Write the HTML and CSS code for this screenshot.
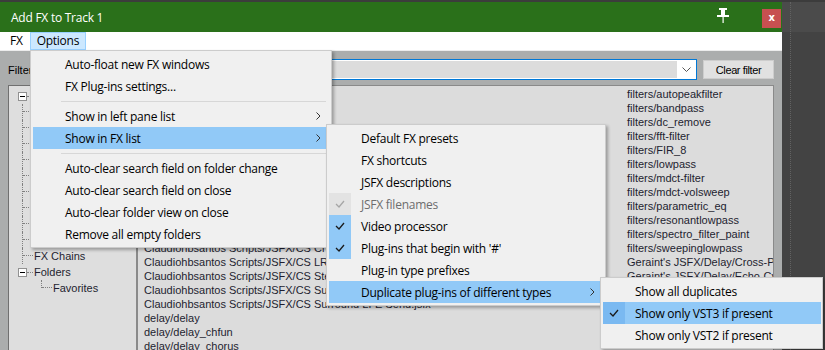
FILE: index.html
```html
<!DOCTYPE html>
<html>
<head>
    <title>Add FX to Track 1</title>
    <link rel="stylesheet" href="styles.css">
</head>
<body>
    <div class="desk">
        <div class="window">
            <div class="titlebar">
                <span class="title">Add FX to Track 1</span>
                <svg class="pin" width="12" height="15" viewBox="0 0 12 15">
                    <rect x="2" y="0" width="8" height="2" fill="#fff"/>
                    <rect x="4" y="2" width="4" height="6" fill="#fff"/>
                    <rect x="0" y="7" width="12" height="2" fill="#fff"/>
                    <rect x="5.5" y="9" width="1.2" height="6" fill="#fff"/>
                </svg>
                <div class="close">x</div>
            </div>
            <div class="menubar">
                <span class="mb-item">FX</span>
                <span class="mb-item open">Options</span>
            </div>
            <div class="panel">
                <div class="filter-row">
                    <span class="filter-label">Filter</span>
                    <div class="combo">
                        <div class="combo-field"></div>
                        <div class="combo-btn">
                            <svg width="9" height="5" viewBox="0 0 9 5"><polyline points="0.5,0.5 4.5,4.5 8.5,0.5" fill="none" stroke="#555" stroke-width="1"/></svg>
                        </div>
                    </div>
                    <button class="clear-btn">Clear filter</button>
                </div>
                <div class="panes">
                    <div class="tree">
                        <div class="node"><span class="exp"></span><span class="hline"></span><span class="lbl">All Plugins</span></div>
                        <div class="node"><span class="twig"></span><span class="lbl">New</span></div>
                        <div class="node"><span class="twig"></span><span class="lbl">Recent</span></div>
                        <div class="node"><span class="twig"></span><span class="lbl">VST</span></div>
                        <div class="node"><span class="twig"></span><span class="lbl">VSTi</span></div>
                        <div class="node"><span class="twig"></span><span class="lbl">VST3</span></div>
                        <div class="node"><span class="twig"></span><span class="lbl">VST3i</span></div>
                        <div class="node"><span class="twig"></span><span class="lbl">JS</span></div>
                        <div class="node"><span class="twig"></span><span class="lbl">Cockos</span></div>
                        <div class="node"><span class="twig"></span><span class="lbl">Track Templates</span></div>
                        <div class="node"><span class="twig"></span><span class="lbl">FX Chains</span></div>
                        <div class="node"><span class="exp"></span><span class="hline"></span><span class="lbl">Folders</span></div>
                        <div class="node"><span class="twig last"></span><span class="lbl">Favorites</span></div>
                    </div>
                    <div class="fxlist">
                        <div class="col">
                            <div>analysis/gfxanalyzer</div>
                            <div>analysis/gfxscope</div>
                            <div>analysis/loudness_meter</div>
                            <div>analysis/spectrograph</div>
                            <div>analysis/tuner</div>
                            <div>Claudiohbsantos Scripts/JSFX/CS 5.1 Panner</div>
                            <div>Claudiohbsantos Scripts/JSFX/CS Auto Gain</div>
                            <div>Claudiohbsantos Scripts/JSFX/CS Band Split</div>
                            <div>Claudiohbsantos Scripts/JSFX/CS Bus Meter</div>
                            <div>Claudiohbsantos Scripts/JSFX/CS Center Cut</div>
                            <div>Claudiohbsantos Scripts/JSFX/CS Channel Mapper</div>
                            <div>Claudiohbsantos Scripts/JSFX/CS Channel Router</div>
                            <div>Claudiohbsantos Scripts/JSFX/CS LR Mono Sum</div>
                            <div>Claudiohbsantos Scripts/JSFX/CS Stereo Width</div>
                            <div>Claudiohbsantos Scripts/JSFX/CS Surround Meter</div>
                            <div>Claudiohbsantos Scripts/JSFX/CS Surround LFE Send.jsfx</div>
                            <div>delay/delay</div>
                            <div>delay/delay_chfun</div>
                            <div>delay/delay_chorus</div>
                        </div>
                        <div class="col">
                            <div>filters/autopeakfilter</div>
                            <div>filters/bandpass</div>
                            <div>filters/dc_remove</div>
                            <div>filters/fft-filter</div>
                            <div>filters/FIR_8</div>
                            <div>filters/lowpass</div>
                            <div>filters/mdct-filter</div>
                            <div>filters/mdct-volsweep</div>
                            <div>filters/parametric_eq</div>
                            <div>filters/resonantlowpass</div>
                            <div>filters/spectro_filter_paint</div>
                            <div>filters/sweepinglowpass</div>
                            <div>Geraint's JSFX/Delay/Cross-Pollinator</div>
                            <div>Geraint's JSFX/Delay/Echo-Cycles</div>
                        </div>
                    </div>
                </div>
            </div>
        </div>
        <div class="side"><div class="side-line"></div></div>
    </div>

    <div class="menu opt-menu">
        <div class="mi"><span class="ck"></span>Auto-float new FX windows</div>
        <div class="mi"><span class="ck"></span>FX Plug-ins settings...</div>
        <div class="sep"></div>
        <div class="mi"><span class="ck"></span>Show in left pane list<svg class="arrow" width="5" height="8" viewBox="0 0 5 8"><polyline points="0.5,0.5 4,4 0.5,7.5" fill="none" stroke="#333" stroke-width="1"/></svg></div>
        <div class="mi hl"><span class="ck"></span>Show in FX list<svg class="arrow" width="5" height="8" viewBox="0 0 5 8"><polyline points="0.5,0.5 4,4 0.5,7.5" fill="none" stroke="#333" stroke-width="1"/></svg></div>
        <div class="sep"></div>
        <div class="mi"><span class="ck"></span>Auto-clear search field on folder change</div>
        <div class="mi"><span class="ck"></span>Auto-clear search field on close</div>
        <div class="mi"><span class="ck"></span>Auto-clear folder view on close</div>
        <div class="mi"><span class="ck"></span>Remove all empty folders</div>
    </div>

    <div class="menu sub-menu">
        <div class="mi"><span class="ck"></span>Default FX presets</div>
        <div class="mi"><span class="ck"></span>FX shortcuts</div>
        <div class="mi"><span class="ck"></span>JSFX descriptions</div>
        <div class="mi disabled"><span class="ck dim"><svg width="10" height="8" viewBox="0 0 10 8"><polyline points="1,4 4,7 9,1" fill="none" stroke="#a6a6a6" stroke-width="1.3"/></svg></span>JSFX filenames</div>
        <div class="mi"><span class="ck on"><svg width="10" height="8" viewBox="0 0 10 8"><polyline points="1,4 4,7 9,1" fill="none" stroke="#1a1a1a" stroke-width="1.3"/></svg></span>Video processor</div>
        <div class="mi"><span class="ck on"><svg width="10" height="8" viewBox="0 0 10 8"><polyline points="1,4 4,7 9,1" fill="none" stroke="#1a1a1a" stroke-width="1.3"/></svg></span>Plug-ins that begin with '#'</div>
        <div class="mi"><span class="ck"></span>Plug-in type prefixes</div>
        <div class="mi hl"><span class="ck"></span>Duplicate plug-ins of different types<svg class="arrow" width="5" height="8" viewBox="0 0 5 8"><polyline points="0.5,0.5 4,4 0.5,7.5" fill="none" stroke="#333" stroke-width="1"/></svg></div>
    </div>

    <div class="menu dup-menu">
        <div class="mi"><span class="ck"></span>Show all duplicates</div>
        <div class="mi hl"><span class="ck on-hl"><svg width="10" height="8" viewBox="0 0 10 8"><polyline points="1,4 4,7 9,1" fill="none" stroke="#1a1a1a" stroke-width="1.3"/></svg></span>Show only VST3 if present</div>
        <div class="mi"><span class="ck"></span>Show only VST2 if present</div>
    </div>
</body>
</html>
```

FILE: styles.css
```css
* {
    box-sizing: border-box;
}
body {
    margin: 0;
    width: 825px;
    height: 350px;
    overflow: hidden;
    position: relative;
    background-color: #3c3c3c;
    font-family: "Open Sans", sans-serif;
    font-size: 12px;
    letter-spacing: -0.25px;
}
.desk {
    display: flex;
    height: 350px;
    padding-top: 2px;
}
.window {
    width: 782px;
    flex: none;
    display: flex;
    flex-direction: column;
}
.side {
    flex: 1;
    background: linear-gradient(#4b4b4b 30px, #434343 30px);
}
.side-line {
    margin-left: 8px;
    height: 100%;
    border-left: 1px dotted #626262;
}

/* title bar */
.titlebar {
    height: 30px;
    flex: none;
    background-color: #2a701a;
    display: flex;
    align-items: center;
    padding-left: 11px;
    color: white;
}
.title {
    flex: 1;
}
.pin {
    margin-right: 33px;
    margin-top: -3px;
}
.close {
    width: 19px;
    height: 19px;
    margin-top: 3px;
    margin-right: 1px;
    background-color: #c75050;
    display: flex;
    align-items: center;
    justify-content: center;
    font-family: "DejaVu Sans", sans-serif;
    font-weight: bold;
    font-size: 10px;
    line-height: 1;
    padding-bottom: 2px;
}

/* menu bar */
.menubar {
    height: 19px;
    flex: none;
    background-color: white;
    border-bottom: 1px solid #ececec;
    display: flex;
    padding-left: 3px;
}
.mb-item {
    height: 18px;
    line-height: 16px;
    padding: 0 6px;
    border: 1px solid transparent;
    color: black;
}
.mb-item.open {
    background-color: #cce8ff;
    border-color: #99d1ff;
}

/* window body */
.panel {
    flex: 1;
    min-height: 0;
    background-color: #abadad;
    padding: 8px 8px 0;
    display: flex;
    flex-direction: column;
}
.filter-row {
    display: flex;
    align-items: center;
    height: 21px;
    flex: none;
}
.filter-label {
    font-family: "Liberation Sans", Arial, sans-serif;
    font-size: 11px;
    letter-spacing: 0;
    margin-right: 8px;
}
.combo {
    flex: 1;
    height: 21px;
    display: flex;
    border: 1px solid #0078d7;
    background-color: white;
    padding: 1px;
}
.combo-field {
    flex: 1;
    background-color: #dcdcdc;
}
.combo-btn {
    width: 18px;
    display: flex;
    align-items: center;
    justify-content: center;
}
.clear-btn {
    width: 71px;
    height: 19px;
    margin-left: 6px;
    padding: 0;
    background-color: #e1e1e1;
    border: 1px solid #cdcdcd;
    font-family: "Liberation Sans", Arial, sans-serif;
    font-size: 11px;
    letter-spacing: -0.4px;
    color: black;
}
.panes {
    flex: 1;
    min-height: 0;
    display: flex;
    margin-top: 5px;
}

/* folder tree */
.tree {
    width: 128px;
    flex: none;
    background-color: #dedede;
    border-left: 1px solid #707070;
    border-top: 1px solid #707070;
    padding-top: 2px;
}
.node {
    height: 16px;
    display: flex;
    align-items: center;
    font-family: "Liberation Sans", Arial, sans-serif;
    font-size: 11px;
    letter-spacing: 0;
    color: #1e1e30;
    white-space: nowrap;
}
.exp {
    width: 9px;
    height: 9px;
    margin-left: 9px;
    border: 1px solid #919191;
    background-color: white;
    display: flex;
    align-items: center;
    justify-content: center;
}
.exp::after {
    content: "";
    width: 5px;
    height: 1px;
    background-color: black;
}
.hline {
    width: 6px;
    border-top: 1px dotted #808080;
    margin-right: 1px;
}
.twig {
    width: 11px;
    height: 16px;
    margin-left: 13px;
    margin-right: 1px;
    align-self: flex-start;
    border-left: 1px dotted #808080;
}
.twig::after {
    content: "";
    display: block;
    width: 10px;
    margin-top: 7px;
    border-top: 1px dotted #808080;
}
.twig.last {
    height: 8px;
    margin-left: 32px;
}

/* plug-in list */
.fxlist {
    flex: 1;
    display: flex;
    overflow: hidden;
    background-color: #dcdcdc;
    border-left: 2px solid #8a8a8a;
    border-top: 1px solid #8a8a8a;
    border-right: 1px solid #8a8a8a;
    padding-top: 1px;
}
.col {
    width: 483px;
    flex: none;
    padding-left: 6px;
    overflow: hidden;
}
.col div {
    height: 14px;
    line-height: 14px;
    white-space: nowrap;
    font-family: "Liberation Sans", Arial, sans-serif;
    font-size: 11px;
    letter-spacing: 0;
    color: #1e1e30;
}

/* popup menus */
.menu {
    position: absolute;
    background-color: #f0f0f0;
    border: 1px solid #cccccc;
    padding: 2px 5px 2px 2px;
    box-shadow: 2px 2px 3px rgba(0,0,0,0.3);
    color: black;
}
.opt-menu {
    left: 30px;
    top: 50px;
    width: 302px;
}
.sub-menu {
    left: 326px;
    top: 124px;
    width: 280px;
}
.dup-menu {
    left: 600px;
    top: 277px;
    width: 223px;
    padding-right: 1px;
}
.mi {
    height: 22px;
    display: flex;
    align-items: center;
    white-space: nowrap;
}
.mi.hl {
    background-color: #91c9f7;
}
.mi.disabled {
    color: #6d6d6d;
}
.ck {
    width: 22px;
    height: 22px;
    flex: none;
    margin-right: 10px;
    display: flex;
    align-items: center;
    justify-content: center;
}
.ck.on {
    background-color: #91c9f7;
}
.ck.dim {
    background-color: #e3e3e3;
}
.ck.on-hl {
    background-color: #7ab9f1;
}
.arrow {
    margin-left: auto;
    margin-right: 5px;
}
.sep {
    height: 1px;
    background-color: #d7d7d7;
    margin: 4px 0 3px 28px;
}
```
